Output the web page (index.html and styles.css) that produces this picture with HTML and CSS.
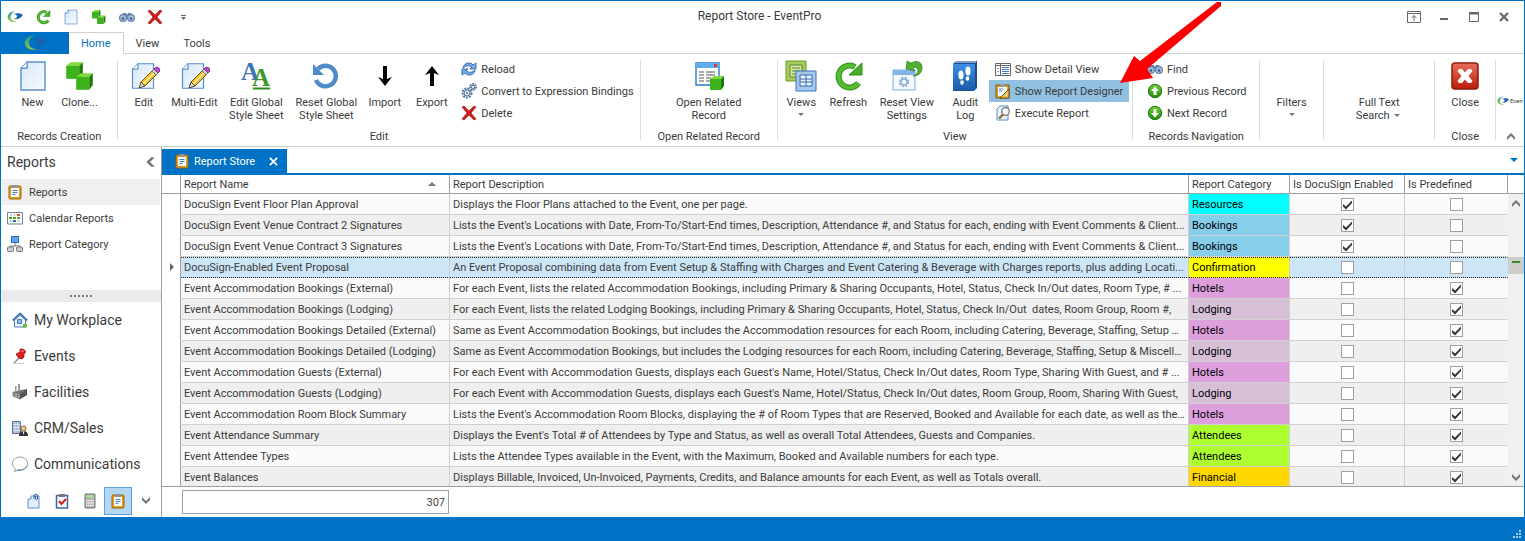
FILE: index.html
```
<!DOCTYPE html>
<html lang="en">
  <head>
    <meta charset="UTF-8" />
    <meta name="viewport" content="width=device-width, initial-scale=1.0" />
    <title>Report Store - EventPro</title>
    <link rel="stylesheet" href="styles.css">
  </head>
  <body>
    <!-- Icon sprite -->
    <svg class="sprite" aria-hidden="true">
      <defs>
        <linearGradient id="gGreen" x1="0" y1="0" x2="0" y2="1"><stop offset="0" stop-color="#6fd02a" /><stop offset="1" stop-color="#1d8a12" /></linearGradient>
        <linearGradient id="gPage" x1="0" y1="0" x2="1" y2="1"><stop offset="0" stop-color="#d6e8fa" /><stop offset="1" stop-color="#f6fbff" /></linearGradient>
        <linearGradient id="gRed" x1="0" y1="0" x2="0" y2="1"><stop offset="0" stop-color="#e8705c" /><stop offset="1" stop-color="#b81c08" /></linearGradient>
        <linearGradient id="gBlue" x1="0" y1="0" x2="0" y2="1"><stop offset="0" stop-color="#3f8ee0" /><stop offset="1" stop-color="#1b5cab" /></linearGradient>
        <linearGradient id="gLogo" x1="0" y1="0" x2="0" y2="1"><stop offset="0" stop-color="#1c9a8c" /><stop offset="1" stop-color="#8cc63c" /></linearGradient>
      </defs>
      <symbol id="logo" viewBox="0 0 22 18">
        <path d="M12 1C5 1 0 5 1 10c1 5 7 7 13 5-6 0-9-2-9-6s3-7 7-8z" fill="url(#gLogo)" />
        <path d="M9 5c5-2 10-1 13 1-3 5-8 7-13 6 3-1 5-2 5-4-1-2-3-3-5-3z" fill="#1b5fae" />
      </symbol>
      <symbol id="page" viewBox="0 0 32 32">
        <path d="M10 2h18v28H4V8h6z" fill="url(#gPage)" stroke="#5b8fcb" stroke-width="1.4" />
        <path d="M4 8l6-6v6z" fill="#fff" stroke="#5b8fcb" />
      </symbol>
      <symbol id="cube" viewBox="0 0 16 16">
        <path d="M1 4l4-3h10l-3 3z" fill="#7ddb3c" />
        <path d="M1 4h11v11H1z" fill="#3db21a" />
        <path d="M12 4l3-3v10l-3 4z" fill="#1c7a0c" />
      </symbol>
      <symbol id="cubes" viewBox="0 0 32 32">
        <use href="#cube" x="1" y="1" width="19" height="19" />
        <use href="#cube" x="11" y="12" width="19" height="19" />
      </symbol>
      <symbol id="refresh" viewBox="0 0 32 32">
        <path d="M26.500 23A11 11 0 1 1 23 7" fill="none" stroke="#2f8f1c" stroke-width="6" />
        <path d="M26.500 23A11 11 0 1 1 23 7" fill="none" stroke="#55bb30" stroke-width="4" />
        <path d="M30 3v12H17z" fill="#45ad28" stroke="#2f8f1c" />
      </symbol>
      <symbol id="binoc" viewBox="0 0 16 16">
        <path d="M2 8l2-4h3l1 2 1-2h3l2 4z" fill="#5f80ac" />
        <circle cx="4" cy="9" r="3.400" fill="#a9c2e0" stroke="#6884ab" stroke-width="1.200" />
        <circle cx="12" cy="9" r="3.400" fill="#a9c2e0" stroke="#6884ab" stroke-width="1.200" />
        <circle cx="4" cy="9.500" r="1.300" fill="#3b5d8d" /><circle cx="12" cy="9.500" r="1.300" fill="#3b5d8d" />
      </symbol>
      <symbol id="cross" viewBox="0 0 16 16">
        <path d="M1 2l2-1 5 5 5-5 2 1-5 6 5 6-2 1-5-5-5 5-2-1 5-6z" fill="#d31b1b" stroke="#a50f0f" stroke-width=".6" />
      </symbol>
      <symbol id="pencilpage" viewBox="0 0 32 32">
        <use href="#page" x="1" y="0" width="28" height="32" />
        <path d="M13 22L25 10l4 4-12 12z" fill="#f5c22e" stroke="#6d5314" />
        <path d="M15 24L27 12" stroke="#fff1a0" stroke-width="1.500" />
        <path d="M13 22l4 4-6 2z" fill="#efd9b0" stroke="#444" />
        <path d="M24 11l3-3 4 4-3 3z" fill="#ccc" stroke="#555" stroke-width=".6" />
        <path d="M26 9l2-2q4 0 4 4l-2 2z" fill="#b94bd0" stroke="#72247f" stroke-width=".8" />
      </symbol>
      <symbol id="undo" viewBox="0 0 32 32">
        <path d="M8 9a10.300 10.300 0 1 1-2 11" fill="none" stroke="#4e8ac6" stroke-width="4.400" />
        <path d="M3 4v11h11z" fill="#4e8ac6" />
      </symbol>
      <symbol id="down" viewBox="0 0 32 32"><path d="M14 6h4v13l5-2-7 9-7-9 5 2z" fill="#000" /></symbol>
      <symbol id="up" viewBox="0 0 32 32"><path d="M14 26h4V13l5 2-7-9-7 9 5-2z" fill="#000" /></symbol>
      <symbol id="reload" viewBox="0 0 16 16">
        <path d="M2 7q1-5 6-5 3 0 4 2l3-2v6H9l2-2q-5-3-9 1z" fill="#76a9e3" stroke="#2c66b0" stroke-width=".9" />
        <path d="M14 9q-1 5-6 5-3 0-4-2l-3 2V8h6l-2 2q5 3 9-1z" fill="#76a9e3" stroke="#2c66b0" stroke-width=".9" />
      </symbol>
      <symbol id="gears" viewBox="0 0 16 16">
        <circle cx="6" cy="10" r="4.500" fill="none" stroke="#56789b" stroke-width="2" stroke-dasharray="2 1" />
        <circle cx="6" cy="10" r="3" fill="#dce7f1" stroke="#56789b" /><circle cx="6" cy="10" r="1" fill="#56789b" />
        <circle cx="12" cy="4" r="3" fill="none" stroke="#56789b" stroke-width="2" stroke-dasharray="1.600 1" />
        <circle cx="12" cy="4" r="1.800" fill="#dce7f1" stroke="#56789b" />
      </symbol>
      <symbol id="related" viewBox="0 0 32 32">
        <path d="M3 3h23v22H3z" fill="#fff" stroke="#2a7ccc" stroke-width="1.400" />
        <path d="M3 3h23v5H3z" fill="#5cb0f2" /><path d="M21 4h3v3h-3z" fill="#e33b22" />
        <path d="M6 12h5m2 0h9M6 15h5m2 0h9M6 18h5m2 0h5M6 21h5m2 0h4" stroke="#555" />
        <use href="#cube" x="16" y="15" width="16" height="16" />
      </symbol>
      <symbol id="views" viewBox="0 0 32 32">
        <path d="M1 1h20v20H1z" fill="#a6cb5c" stroke="#719b2d" />
        <path d="M5 5h12v12H5z" fill="#d3e6a6" stroke="#5f8424" /><path d="M7 8h8M7 11h8M7 14h8" stroke="#5f8424" />
        <path d="M11 11h20v20H11z" fill="#a5c9ee" stroke="#3c74b5" />
        <path d="M15 15h12v11H15zM21 15v11M15 19h12M15 22h12" fill="#e8f3ff" stroke="#3769a8" />
      </symbol>
      <symbol id="resetview" viewBox="0 0 32 32">
        <path d="M2 10h22v20H2z" fill="#f3f9ff" stroke="#7fabdb" /><path d="M2 10h22v5H2z" fill="#82b4e8" />
        <circle cx="13" cy="22" r="4.300" fill="none" stroke="#8fb0d0" stroke-width="2" stroke-dasharray="2 1.400" />
        <circle cx="13" cy="22" r="3" fill="none" stroke="#8fb0d0" stroke-width="1.600" />
        <path d="M20 3c7-4 12 0 11 6-1 5-4 7-9 7 4-2 6-5 4-8-1-1-3-1-4 0l2 3-9-2 1-8z" fill="#53ae34" stroke="#2f8420" stroke-width=".7" />
      </symbol>
      <symbol id="audit" viewBox="0 0 32 32">
        <path d="M4 4l3-3h21v27l-3 3H4z" fill="#174f94" /><path d="M4 4h22v26H4z" fill="url(#gBlue)" /><path d="M6 2h21" stroke="#dfe9f5" />
        <ellipse cx="12" cy="15" rx="2.600" ry="4.500" fill="#fff" /><ellipse cx="13" cy="22.500" rx="1.800" ry="2.200" fill="#fff" />
        <ellipse cx="19" cy="11" rx="2.600" ry="4.500" fill="#fff" /><ellipse cx="18.500" cy="18.500" rx="1.800" ry="2.200" fill="#fff" />
      </symbol>
      <symbol id="detail" viewBox="0 0 16 16">
        <path d="M.5 2.500h15v12H.5zM5.500 2.500v12M.5 4.500h15" fill="#fff" stroke="#666" />
        <path d="M7 6.500h7M7 8.500h7M7 10.500h7M7 12.500h7" stroke="#3a7cc0" /><path d="M2 7.500h2M2 10.500h2" stroke="#999" />
      </symbol>
      <symbol id="designer" viewBox="0 0 16 16">
        <path d="M1 2h13v13H1z" fill="#e0a422" stroke="#7a5510" /><path d="M3 4h9v9H3z" fill="#f3f7fc" /><path d="M5 1h5v3H5z" fill="#999" />
        <path d="M14 6v9H5z" fill="#f2c246" stroke="#5e430f" stroke-width=".9" /><path d="M12 11v2h-2z" fill="#fff" /><path d="M4 6h4M4 8h3" stroke="#6a8cb5" />
      </symbol>
      <symbol id="execute" viewBox="0 0 16 16">
        <path d="M5 1h8v14H2V4z" fill="#e9f3fd" stroke="#5c8cc4" />
        <circle cx="10.500" cy="6.500" r="3.800" fill="#f7fbff" stroke="#777" stroke-width="1.300" /><path d="M8 9.500l-4 4" stroke="#9a6b35" stroke-width="2.400" />
      </symbol>
      <symbol id="recup" viewBox="0 0 16 16">
        <circle cx="8" cy="8" r="6.700" fill="url(#gGreen)" stroke="#1c7512" /><path d="M8 3.500L12 8h-2.500v4h-3V8H4z" fill="#fff" />
      </symbol>
      <symbol id="recdown" viewBox="0 0 16 16">
        <circle cx="8" cy="8" r="6.700" fill="url(#gGreen)" stroke="#1c7512" /><path d="M8 12.500L4 8h2.500V4h3v4H12z" fill="#fff" />
      </symbol>
      <symbol id="closebig" viewBox="0 0 32 32">
        <rect x="3" y="3" width="26" height="26" rx="3" fill="url(#gRed)" stroke="#941808" stroke-width="1.500" />
        <path d="M10 9h3l3 3.500L19 9h3l1.500 2-4 5 4 5-1.500 2h-3l-3-3.500-3 3.500h-3l-1.500-2 4-5-4-5z" fill="#fff" />
      </symbol>
      <symbol id="clip" viewBox="0 0 16 16">
        <rect x="2" y="2" width="12" height="13" rx="1" fill="#e2a01c" stroke="#94620c" /><path d="M4 4h8v9H4z" fill="#f5f9ff" />
        <path d="M5.500 1h5v3h-5z" fill="#8d949c" /><path d="M5.500 6.500h5M5.500 8.500h5M5.500 10.500h3" stroke="#4c7fbd" />
      </symbol>
      <symbol id="calendar" viewBox="0 0 16 16">
        <path d="M.5 2.500h15v11.500H.5z" fill="#fff" stroke="#6886a6" /><path d="M3 4h2v2H3zM3 10h2v2H3z" fill="#c5cbd2" />
        <path d="M6.500 4h2v2h-2z" fill="#c5cbd2" /><path d="M10 4h3v2h-3z" fill="#e0522a" /><path d="M2 7h3v2H2zM6 7h3v2H6z" fill="#51a627" />
        <path d="M6 10h3v2H6z" fill="#2a6fb5" /><path d="M10 7h3v2h-3z" fill="#51a627" /><path d="M10.500 10h2v2h-2z" fill="#c5cbd2" />
      </symbol>
      <symbol id="tree" viewBox="0 0 16 16">
        <path d="M8 7v3M3 12v-2h10v2" fill="none" stroke="#777" /><rect x="4.500" y=".5" width="7" height="6" fill="#5aa6ee" stroke="#2f71b8" />
        <rect x=".5" y="11" width="6" height="4.500" rx="1" fill="#ccc" stroke="#777" /><rect x="9.500" y="11" width="6" height="4.500" rx="1" fill="#ccc" stroke="#777" />
      </symbol>
      <symbol id="home" viewBox="0 0 16 16">
        <path d="M2.500 8v7h11V8L8 3z" fill="#eaf2fb" stroke="#5b84b5" /><path d="M.7 8.500L8 1.500l7.300 7" fill="none" stroke="#4679b8" stroke-width="1.800" />
        <path d="M5.500 7.500h4v4h-4z" fill="#8fbbe8" stroke="#4679b8" /><path d="M11 12h4v3.500h-4z" fill="#6eb83a" />
      </symbol>
      <symbol id="pin" viewBox="0 0 16 16">
        <path d="M2 15l6-6" stroke="#888" stroke-width="1.300" /><path d="M1 15.500h11" stroke="#ccc" />
        <path d="M8 1q4-1 6 3l-2 2v3l-2 2q-4 0-6-5l2-1 2-1z" fill="#d92323" stroke="#971010" stroke-width=".7" /><path d="M9 3q2-1 3 1" stroke="#f79a9a" fill="none" />
      </symbol>
      <symbol id="factory" viewBox="0 0 16 16">
        <path d="M1 8l8-2 6-1v6l-7 4-7-3z" fill="#777" /><path d="M1 8l7 2v5l-7-3z" fill="#aaa" stroke="#555" stroke-width=".6" /><path d="M8 10l7-5v6l-7 4z" fill="#555" />
        <path d="M3 2h1.500v6H3zM6 0h2v7H6z" fill="#999" /><path d="M2 10h1v1H2zM5 11h1v1H5z" fill="#333" />
      </symbol>
      <symbol id="crm" viewBox="0 0 16 16">
        <path d="M.5 1.500h8v12h-8z" fill="#9eb2d2" stroke="#5e7396" /><path d="M3 2v11M6 2v11M1 4.500h7M1 7.500h7M1 10.500h7" stroke="#e3ebf6" stroke-width=".8" />
        <path d="M7 16q0-5 4.500-5t4.500 5z" fill="#333" /><path d="M10.500 11l1 4 1-4z" fill="#fff" /><circle cx="11.500" cy="8.500" r="2.500" fill="#f2c891" stroke="#8a5b23" />
      </symbol>
      <symbol id="bubble" viewBox="0 0 16 16">
        <path d="M8 1c4 0 7.500 2.800 7.500 6.500S12 14 8 14H6l-3.500 1.700 1-3C2 11.700.5 10 .5 7.500.5 3.800 4 1 8 1z" fill="#fff" stroke="#999" />
        <path d="M5 14q8 1 10-4" stroke="#4a86bd" fill="none" />
      </symbol>
      <symbol id="note" viewBox="0 0 16 16">
        <path d="M5 3h8v12H2V6h3z" fill="#e4f0fd" stroke="#5b8fcb" /><path d="M8 6V2q2-2 3.500 0v4q-1 1.500-2 0V3" fill="none" stroke="#2c5a8c" />
      </symbol>
      <symbol id="task" viewBox="0 0 16 16">
        <path d="M2.500 2.500h11v12.500h-11z" fill="#f3f8fe" stroke="#3c68a4" stroke-width="1.500" /><path d="M5 1h6v3H5z" fill="#777" /><path d="M5 8l2.500 3L12 6" fill="none" stroke="#d42020" stroke-width="2" />
      </symbol>
      <symbol id="calc" viewBox="0 0 16 16">
        <path d="M3 1h10v14H3z" fill="#aaa" stroke="#777" /><path d="M4 2h8v3H4z" fill="#a9d89e" />
        <path d="M4 7.500h8M4 10h8M4 12.500h8" stroke="#f4f4f4" stroke-width="1.500" stroke-dasharray="1.600 .5" />
      </symbol>
      <symbol id="chev" viewBox="0 0 10 8"><path d="M1 0v3l4 4 4-4V0L5 4z" fill="#777" /></symbol>
    </svg>

    <div class="window">
      <header class="titlebar">
        <div class="quick-access">
          <svg class="icon"><use href="#logo" /></svg>
          <button class="qa" aria-label="Refresh"><svg class="icon"><use href="#refresh" /></svg></button>
          <button class="qa" aria-label="New"><svg class="icon"><use href="#page" /></svg></button>
          <button class="qa" aria-label="Clone"><svg class="icon"><use href="#cubes" /></svg></button>
          <button class="qa" aria-label="Find"><svg class="icon"><use href="#binoc" /></svg></button>
          <button class="qa" aria-label="Delete"><svg class="icon"><use href="#cross" /></svg></button>
          <button class="qa" aria-label="Customize toolbar"><svg class="icon" viewBox="0 0 16 16"><path d="M6 6.500h5" stroke="#666" /><path d="M6 8h5l-2.500 3z" fill="#666" /></svg></button>
        </div>
        <div class="window-title">Report Store - EventPro</div>
        <div class="window-buttons">
          <button aria-label="Ribbon display options"><svg class="icon" viewBox="0 0 16 16"><path d="M1.500 2.500h13v11h-13zM1.500 4.500h13M8 12V6.500M5.500 9L8 6.500 10.500 9" fill="none" stroke="#666" /></svg></button>
          <button aria-label="Minimize"><svg class="icon" viewBox="0 0 16 16"><path d="M4 10h8" stroke="#666" stroke-width="2" /></svg></button>
          <button aria-label="Maximize"><svg class="icon" viewBox="0 0 16 16"><path d="M3.500 3.500h9v9h-9z" fill="none" stroke="#666" /><path d="M3 4.500h10" stroke="#666" stroke-width="2" /></svg></button>
          <button aria-label="Close window"><svg class="icon" viewBox="0 0 16 16"><path d="M4 4l8 8M12 4l-8 8" stroke="#666" stroke-width="2.200" /></svg></button>
        </div>
      </header>

      <nav class="ribbon-tabs">
        <button class="app-button" aria-label="Application menu"><svg><use href="#logo" /></svg></button>
        <button class="ribbon-tab active">Home</button>
        <button class="ribbon-tab">View</button>
        <button class="ribbon-tab">Tools</button>
      </nav>

      <div class="ribbon">
        <section class="group creation">
          <div class="group-items">
            <button class="big"><svg><use href="#page" /></svg>New</button>
            <button class="big"><svg><use href="#cubes" /></svg>Clone...</button>
          </div>
          <div class="caption">Records Creation</div>
        </section>
        <section class="group edit">
          <div class="group-items">
            <button class="big"><svg><use href="#pencilpage" /></svg>Edit</button>
            <button class="big medium"><svg><use href="#pencilpage" /></svg>Multi-Edit</button>
            <button class="big wide">
              <svg viewBox="0 0 32 32">
                <text x="1" y="20" class="glyph-a" fill="#3d74b8">A</text>
                <text x="12" y="26" class="glyph-a" fill="#3c9a2a">A</text>
                <path d="M13 28.500h17" stroke="#2e8a1e" stroke-width="2" />
              </svg>Edit Global<br>Style Sheet
            </button>
            <button class="big wide"><svg><use href="#undo" /></svg>Reset Global<br>Style Sheet</button>
            <button class="big"><svg><use href="#down" /></svg>Import</button>
            <button class="big"><svg><use href="#up" /></svg>Export</button>
            <div class="small-list">
              <button class="small"><svg class="icon"><use href="#reload" /></svg>Reload</button>
              <button class="small"><svg class="icon"><use href="#gears" /></svg>Convert to Expression Bindings</button>
              <button class="small"><svg class="icon"><use href="#cross" /></svg>Delete</button>
            </div>
          </div>
          <div class="caption">Edit</div>
        </section>
        <section class="group related">
          <div class="group-items centered">
            <button class="big wide"><svg><use href="#related" /></svg>Open Related<br>Record</button>
          </div>
          <div class="caption">Open Related Record</div>
        </section>
        <section class="group view">
          <div class="group-items">
            <button class="big"><svg><use href="#views" /></svg>Views<span class="arrow"></span></button>
            <button class="big"><svg><use href="#refresh" /></svg>Refresh</button>
            <button class="big wide"><svg><use href="#resetview" /></svg>Reset View<br>Settings</button>
            <button class="big"><svg><use href="#audit" /></svg>Audit<br>Log</button>
            <div class="small-list">
              <button class="small"><svg class="icon"><use href="#detail" /></svg>Show Detail View</button>
              <button class="small selected">
                <svg class="icon"><use href="#designer" /></svg>Show Report Designer
                <svg class="pointer" viewBox="0 0 102 82" aria-hidden="true"><path d="M0 81L14 54l6 5L97 0h4v4L27 67l6 9z" fill="#f00" /></svg>
              </button>
              <button class="small"><svg class="icon"><use href="#execute" /></svg>Execute Report</button>
            </div>
          </div>
          <div class="caption">View</div>
        </section>
        <section class="group records">
          <div class="group-items">
            <div class="small-list">
              <button class="small"><svg class="icon"><use href="#binoc" /></svg>Find</button>
              <button class="small"><svg class="icon"><use href="#recup" /></svg>Previous Record</button>
              <button class="small"><svg class="icon"><use href="#recdown" /></svg>Next Record</button>
            </div>
          </div>
          <div class="caption">Records Navigation</div>
        </section>
        <section class="group filters">
          <div class="group-items centered">
            <button class="big"><span class="blank"></span>Filters<span class="arrow"></span></button>
          </div>
        </section>
        <section class="group search">
          <div class="group-items centered">
            <button class="big wide"><span class="blank"></span>Full Text<br>Search <span class="arrow inline"></span></button>
          </div>
        </section>
        <section class="group closing">
          <div class="group-items centered">
            <button class="big"><svg><use href="#closebig" /></svg>Close</button>
          </div>
          <div class="caption">Close</div>
        </section>
        <div class="brand">
          <div class="brand-mark"><svg><use href="#logo" /></svg><span>Even</span></div>
          <button class="collapse" aria-label="Collapse ribbon"><svg class="flip"><use href="#chev" /></svg></button>
        </div>
      </div>

      <div class="workspace">
        <aside class="sidebar">
          <div class="sidebar-head">
            <h2>Reports</h2>
            <button aria-label="Collapse navigation"><svg class="turn"><use href="#chev" /></svg></button>
          </div>
          <nav class="links">
            <a href="#" class="current"><svg class="icon"><use href="#clip" /></svg>Reports</a>
            <a href="#"><svg class="icon"><use href="#calendar" /></svg>Calendar Reports</a>
            <a href="#"><svg class="icon"><use href="#tree" /></svg>Report Category</a>
          </nav>
          <div class="splitter"><i></i><i></i><i></i><i></i><i></i><i></i></div>
          <nav class="modules">
            <a href="#"><svg class="icon"><use href="#home" /></svg>My Workplace</a>
            <a href="#"><svg class="icon"><use href="#pin" /></svg>Events</a>
            <a href="#"><svg class="icon"><use href="#factory" /></svg>Facilities</a>
            <a href="#"><svg class="icon"><use href="#crm" /></svg>CRM/Sales</a>
            <a href="#"><svg class="icon"><use href="#bubble" /></svg>Communications</a>
          </nav>
          <div class="module-bar">
            <button aria-label="Notes"><svg class="icon"><use href="#note" /></svg></button>
            <button aria-label="Tasks"><svg class="icon"><use href="#task" /></svg></button>
            <button aria-label="Accounting"><svg class="icon"><use href="#calc" /></svg></button>
            <button aria-label="Reports" class="current"><svg class="icon"><use href="#clip" /></svg></button>
            <button aria-label="More modules"><svg class="chevron"><use href="#chev" /></svg></button>
          </div>
        </aside>

        <main class="content">
          <div class="doc-tabs">
            <div class="doc-tab">
              <svg class="icon"><use href="#clip" /></svg>
              <span>Report Store</span>
              <button aria-label="Close tab"><svg viewBox="0 0 10 10"><path d="M1 1l8 8M9 1L1 9" stroke="#fff" stroke-width="2" /></svg></button>
            </div>
            <button class="tab-menu" aria-label="Open tabs"><span></span></button>
          </div>

          <div class="grid">
            <div class="grid-table">
              <table>
                <colgroup>
                  <col class="col-mark"><col class="col-name"><col><col class="col-category"><col class="col-docusign"><col class="col-predefined">
                </colgroup>
                <thead>
                  <tr>
                    <th class="mark"></th>
                    <th><span class="sorted">Report Name</span></th>
                    <th>Report Description</th>
                    <th>Report Category</th>
                    <th>Is DocuSign Enabled</th>
                    <th>Is Predefined</th>
                  </tr>
                </thead>
                <tbody>
                  <tr>
                    <td class="mark"></td><td>DocuSign Event Floor Plan Approval</td>
                    <td>Displays the Floor Plans attached to the Event, one per page.</td>
                    <td class="resources">Resources</td>
                    <td><input type="checkbox" aria-label="Is DocuSign Enabled" checked></td><td><input type="checkbox" aria-label="Is Predefined"></td>
                  </tr>
                  <tr>
                    <td class="mark"></td><td>DocuSign Event Venue Contract 2 Signatures</td>
                    <td>Lists the Event's Locations with Date, From-To/Start-End times, Description, Attendance #, and Status for each, ending with Event Comments &amp; Client...</td>
                    <td class="bookings">Bookings</td>
                    <td><input type="checkbox" aria-label="Is DocuSign Enabled" checked></td><td><input type="checkbox" aria-label="Is Predefined"></td>
                  </tr>
                  <tr>
                    <td class="mark"></td><td>DocuSign Event Venue Contract 3 Signatures</td>
                    <td>Lists the Event's Locations with Date, From-To/Start-End times, Description, Attendance #, and Status for each, ending with Event Comments &amp; Client...</td>
                    <td class="bookings">Bookings</td>
                    <td><input type="checkbox" aria-label="Is DocuSign Enabled" checked></td><td><input type="checkbox" aria-label="Is Predefined"></td>
                  </tr>
                  <tr class="focused">
                    <td class="mark"><span class="row-mark"></span></td><td>DocuSign-Enabled Event Proposal</td>
                    <td>An Event Proposal combining data from Event Setup &amp; Staffing with Charges and Event Catering &amp; Beverage with Charges reports, plus adding Locati...</td>
                    <td class="confirmation">Confirmation</td>
                    <td><input type="checkbox" aria-label="Is DocuSign Enabled"></td><td><input type="checkbox" aria-label="Is Predefined"></td>
                  </tr>
                  <tr>
                    <td class="mark"></td><td>Event Accommodation Bookings (External)</td>
                    <td>For each Event, lists the related Accommodation Bookings, including Primary &amp; Sharing Occupants, Hotel, Status, Check In/Out dates, Room Type, # ...</td>
                    <td class="hotels">Hotels</td>
                    <td><input type="checkbox" aria-label="Is DocuSign Enabled"></td><td><input type="checkbox" aria-label="Is Predefined" checked></td>
                  </tr>
                  <tr>
                    <td class="mark"></td><td>Event Accommodation Bookings (Lodging)</td>
                    <td>For each Event, lists the related Lodging Bookings, including Primary &amp; Sharing Occupants, Hotel, Status, Check In/Out&nbsp; dates, Room Group, Room #,</td>
                    <td class="lodging">Lodging</td>
                    <td><input type="checkbox" aria-label="Is DocuSign Enabled"></td><td><input type="checkbox" aria-label="Is Predefined" checked></td>
                  </tr>
                  <tr>
                    <td class="mark"></td><td>Event Accommodation Bookings Detailed (External)</td>
                    <td>Same as Event Accommodation Bookings, but includes the Accommodation resources for each Room, including Catering, Beverage, Staffing, Setup &amp; ...</td>
                    <td class="hotels">Hotels</td>
                    <td><input type="checkbox" aria-label="Is DocuSign Enabled"></td><td><input type="checkbox" aria-label="Is Predefined" checked></td>
                  </tr>
                  <tr>
                    <td class="mark"></td><td>Event Accommodation Bookings Detailed (Lodging)</td>
                    <td>Same as Event Accommodation Bookings, but includes the Lodging resources for each Room, including Catering, Beverage, Staffing, Setup &amp; Miscellan...</td>
                    <td class="lodging">Lodging</td>
                    <td><input type="checkbox" aria-label="Is DocuSign Enabled"></td><td><input type="checkbox" aria-label="Is Predefined" checked></td>
                  </tr>
                  <tr>
                    <td class="mark"></td><td>Event Accommodation Guests (External)</td>
                    <td>For each Event with Accommodation Guests, displays each Guest's Name, Hotel/Status, Check In/Out dates, Room Type, Sharing With Guest, and # ...</td>
                    <td class="hotels">Hotels</td>
                    <td><input type="checkbox" aria-label="Is DocuSign Enabled"></td><td><input type="checkbox" aria-label="Is Predefined" checked></td>
                  </tr>
                  <tr>
                    <td class="mark"></td><td>Event Accommodation Guests (Lodging)</td>
                    <td>For each Event with Accommodation Guests, displays each Guest's Name, Hotel/Status, Check In/Out dates, Room Group, Room, Sharing With Guest,</td>
                    <td class="lodging">Lodging</td>
                    <td><input type="checkbox" aria-label="Is DocuSign Enabled"></td><td><input type="checkbox" aria-label="Is Predefined" checked></td>
                  </tr>
                  <tr>
                    <td class="mark"></td><td>Event Accommodation Room Block Summary</td>
                    <td>Lists the Event's Accommodation Room Blocks, displaying the # of Room Types that are Reserved, Booked and Available for each date, as well as the ...</td>
                    <td class="hotels">Hotels</td>
                    <td><input type="checkbox" aria-label="Is DocuSign Enabled"></td><td><input type="checkbox" aria-label="Is Predefined" checked></td>
                  </tr>
                  <tr>
                    <td class="mark"></td><td>Event Attendance Summary</td>
                    <td>Displays the Event's Total # of Attendees by Type and Status, as well as overall Total Attendees, Guests and Companies.</td>
                    <td class="attendees">Attendees</td>
                    <td><input type="checkbox" aria-label="Is DocuSign Enabled"></td><td><input type="checkbox" aria-label="Is Predefined" checked></td>
                  </tr>
                  <tr>
                    <td class="mark"></td><td>Event Attendee Types</td>
                    <td>Lists the Attendee Types available in the Event, with the Maximum, Booked and Available numbers for each type.</td>
                    <td class="attendees">Attendees</td>
                    <td><input type="checkbox" aria-label="Is DocuSign Enabled"></td><td><input type="checkbox" aria-label="Is Predefined" checked></td>
                  </tr>
                  <tr>
                    <td class="mark"></td><td>Event Balances</td>
                    <td>Displays Billable, Invoiced, Un-Invoiced, Payments, Credits, and Balance amounts for each Event, as well as Totals overall.</td>
                    <td class="financial">Financial</td>
                    <td><input type="checkbox" aria-label="Is DocuSign Enabled"></td><td><input type="checkbox" aria-label="Is Predefined" checked></td>
                  </tr>
                </tbody>
              </table>
            </div>
            <div class="scrollbar">
              <div class="scroll-head"></div>
              <button aria-label="Scroll up"><svg class="flip"><use href="#chev" /></svg></button>
              <div class="track"><div class="thumb"></div></div>
              <button aria-label="Scroll down"><svg><use href="#chev" /></svg></button>
            </div>
          </div>

          <div class="summary">
            <div class="total">307</div>
          </div>
        </main>
      </div>

      <footer class="statusbar">
        <svg viewBox="0 0 8 8"><path d="M6 0h2v2H6zM3 3h2v2H3zM6 3h2v2H6zM0 6h2v2H0zM3 6h2v2H3zM6 6h2v2H6z" fill="#a8cdec" /></svg>
      </footer>
    </div>
  </body>
</html>
```
FILE: styles.css
```
* {
  box-sizing: border-box;
}

body {
  margin: 0;
  font-family: Roboto, "Open Sans", sans-serif;
  font-size: 11px;
  line-height: 13px;
  color: #3b3b3b;
  background-color: white;
}

button {
  background: none;
  border: none;
  padding: 0;
  font: inherit;
  color: inherit;
  cursor: pointer;
}

a {
  color: inherit;
  text-decoration: none;
}

svg {
  display: block;
  flex: none;
}

.sprite {
  position: absolute;
  width: 0;
  height: 0;
}

.icon {
  width: 16px;
  height: 16px;
}

.glyph-a {
  font-family: "Liberation Serif", serif;
  font-size: 25px;
  font-weight: bold;
}

.window {
  display: flex;
  flex-direction: column;
  height: 100vh;
  border: 1px solid #0072c6;
  border-bottom: none;
  overflow: hidden;
}

/* Title bar */
.titlebar {
  display: grid;
  grid-template-columns: 1fr auto 1fr;
  align-items: center;
  flex: none;
  height: 31px;
  padding: 0 12px 0 6px;
}

.quick-access {
  display: flex;
  gap: 12px;
}

.window-title {
  font-size: 12px;
}

.window-buttons {
  display: flex;
  justify-content: flex-end;
  gap: 14px;
}

/* Ribbon tabs */
.ribbon-tabs {
  display: flex;
  flex: none;
  height: 22px;
  border-bottom: 1px solid #d0d0d0;
}

.app-button {
  display: flex;
  align-items: center;
  justify-content: center;
  width: 68px;
  height: 22px;
  background-color: #0072c6;
}

.app-button svg {
  width: 22px;
  height: 18px;
}

.ribbon-tab {
  height: 22px;
  padding: 0 12px;
}

.ribbon-tab.active {
  color: #0072c6;
  background-color: white;
  border: 1px solid #d0d0d0;
  border-bottom: none;
  border-left: none;
}

/* Ribbon */
.ribbon {
  display: flex;
  flex: none;
  height: 93px;
  padding: 6px 0;
  border-bottom: 1px solid #d0d0d0;
}

.group {
  display: flex;
  flex-direction: column;
  justify-content: space-between;
  min-width: 0;
  border-right: 1px solid #dcdcdc;
}

.creation { flex: 117 1 0; }
.edit { flex: 524 1 0; }
.related { flex: 137 1 0; }
.view { flex: 356 1 0; }
.records { flex: 127 1 0; }
.filters { flex: 63 1 0; }
.search { flex: 111 1 0; }
.closing { flex: 60 1 0; }

.group-items {
  display: flex;
  align-items: flex-start;
}

.group-items.centered {
  justify-content: center;
}

.creation .group-items {
  padding-left: 8px;
}

.edit .group-items {
  padding-left: 2px;
}

.records .group-items {
  padding-left: 8px;
}

.caption {
  text-align: center;
  height: 10px;
  white-space: nowrap;
}

.big {
  display: block;
  width: 47px;
  text-align: center;
  white-space: nowrap;
}

.big.medium {
  width: 54px;
}

.big.wide {
  width: 70px;
}

.big > svg,
.blank {
  display: block;
  width: 32px;
  height: 32px;
  margin: 0 auto 4px;
}

.arrow {
  display: block;
  width: 5px;
  margin: 4px auto;
  border: 3px solid transparent;
  border-top-color: #777;
  border-bottom: none;
}

.arrow.inline {
  display: inline-block;
  margin: 2px;
}

.small-list {
  display: flex;
  flex-direction: column;
  align-items: flex-start;
  margin-top: -2px;
}

.small {
  display: flex;
  align-items: center;
  gap: 4px;
  height: 22px;
  padding: 0 6px;
  white-space: nowrap;
}

.small.selected {
  position: relative;
  background-color: #92c0e0;
}

/* Red callout arrow, drawn over the ribbon */
.pointer {
  position: absolute;
  left: calc(100% - 9px);
  bottom: 18px;
  width: 102px;
  height: 82px;
  z-index: 2;
  pointer-events: none;
}

.brand {
  display: flex;
  flex-direction: column;
  justify-content: space-between;
  align-items: center;
  width: 28px;
  padding: 34px 0 0 1px;
}

.brand-mark {
  display: flex;
  align-items: center;
  width: 100%;
  gap: 1px;
  font-size: 6px;
}

.brand-mark svg {
  width: 12px;
  height: 10px;
}

.collapse svg {
  width: 10px;
  height: 8px;
}

.flip {
  transform: rotate(180deg);
}

.turn {
  transform: rotate(90deg);
}

/* Workspace */
.workspace {
  display: flex;
  flex: 1;
  min-height: 0;
}

.sidebar {
  display: flex;
  flex-direction: column;
  width: 161px;
  border-right: 1px solid #a0a0a0;
}

.sidebar-head {
  display: flex;
  align-items: center;
  justify-content: space-between;
  height: 32px;
  padding: 0 5px 2px 6px;
}

.sidebar-head h2 {
  margin: 0;
  font-size: 14px;
  font-weight: normal;
}

.sidebar-head svg {
  width: 12px;
  height: 10px;
}

.module-bar .chevron {
  width: 10px;
  height: 8px;
}

.links {
  flex: 1;
  padding: 0 1px;
}

.links a {
  display: flex;
  align-items: center;
  gap: 6px;
  height: 26px;
  padding-left: 5px;
}

.links a.current {
  background-color: #f0f0f0;
}

.splitter {
  display: flex;
  align-items: center;
  justify-content: center;
  gap: 2px;
  height: 12px;
  background-color: #ebebeb;
}

.splitter i {
  width: 2px;
  height: 2px;
  background-color: #777;
}

.modules a {
  display: flex;
  align-items: center;
  gap: 6px;
  height: 36px;
  padding-left: 11px;
  font-size: 14px;
}

.module-bar {
  display: flex;
  justify-content: flex-end;
  height: 35px;
  padding: 5px 1px 2px;
}

.module-bar button {
  display: flex;
  align-items: center;
  justify-content: center;
  width: 28px;
  height: 28px;
}

.module-bar button.current {
  background-color: #b3d7f2;
  border: 1px solid #5ba3e0;
}

.content {
  display: flex;
  flex-direction: column;
  flex: 1;
  min-width: 0;
}

.doc-tabs {
  display: flex;
  align-items: flex-end;
  justify-content: space-between;
  flex: none;
  height: 28px;
  border-bottom: 2px solid #0072c6;
}

.doc-tab {
  display: flex;
  align-items: center;
  gap: 4px;
  height: 24px;
  padding: 0 7px 0 12px;
  color: white;
  background-color: #0072c6;
}

.doc-tab button {
  padding: 2px;
  margin-left: 8px;
}

.doc-tab button svg {
  width: 9px;
  height: 9px;
}

.tab-menu {
  align-self: center;
  padding: 4px 6px;
}

.tab-menu span {
  display: block;
  border: 4px solid transparent;
  border-top-color: #0072c6;
  border-bottom: none;
}

/* Report grid */
.grid {
  display: flex;
  flex: 1;
  min-height: 0;
}

.grid-table {
  flex: 1;
  min-width: 0;
  overflow: hidden;
}

table {
  width: 100%;
  table-layout: fixed;
  border-collapse: separate;
  border-spacing: 0;
}

.col-mark { width: 19px; }
.col-name { width: 269px; }
.col-category { width: 101px; }
.col-docusign { width: 115px; }
.col-predefined { width: 103px; }

th,
td {
  padding: 0 3px;
  text-align: left;
  font-weight: normal;
  white-space: nowrap;
  overflow: hidden;
  text-overflow: ellipsis;
}

th {
  height: 19px;
  border-right: 1px solid #a0a0a0;
  border-bottom: 1px solid #a0a0a0;
}

td {
  height: 21px;
  background-color: #fafafa;
  border-right: 1px solid #d0d0d0;
  border-bottom: 1px solid #d0d0d0;
}

tbody tr:nth-child(even) td {
  background-color: #efefef;
}

td.mark,
tbody tr:nth-child(even) td.mark {
  padding: 0;
  background-color: white;
  border-right-color: #a0a0a0;
  border-bottom-color: white;
}

td:last-child {
  border-right-color: transparent;
}

.sorted {
  display: flex;
  align-items: center;
  justify-content: space-between;
}

.sorted::after {
  content: "";
  margin-right: 10px;
  border: 4px solid transparent;
  border-bottom-color: #777;
  border-top: none;
}

.row-mark {
  display: block;
  margin-left: 8px;
  width: 4px;
  border: 4px solid transparent;
  border-left-color: #666;
  border-right: none;
}

tbody tr.focused td:not(.mark) {
  background-color: #cde6f7;
  border-top: 1px dotted #222;
  border-bottom: 1px dotted #222;
}

tbody td.resources { background-color: #00ffff; }
tbody tr:nth-child(n) td.bookings { background-color: #87ceeb; }
tbody tr.focused td.confirmation:not(.mark) { background-color: #ffff00; }
tbody tr:nth-child(n) td.hotels { background-color: #dda0dd; }
tbody tr:nth-child(n) td.lodging { background-color: #d8bfd8; }
tbody tr:nth-child(n) td.attendees { background-color: #adff2f; }
tbody tr:nth-child(n) td.financial { background-color: #ffd700; }

.resources,
.bookings,
.confirmation,
.hotels,
.lodging,
.attendees,
.financial {
  color: #000;
}

input[type="checkbox"] {
  appearance: none;
  display: block;
  width: 13px;
  height: 13px;
  margin: 0 auto;
  border: 1px solid #a0a0a0;
  background: white center no-repeat;
}

input[type="checkbox"]:checked {
  background-image: url("data:image/svg+xml,%3Csvg xmlns='http://www.w3.org/2000/svg' width='11' height='11'%3E%3Cpath d='M1 5v2.500l3 3L10 4V1.500L4 7.500z' fill='%23333'/%3E%3C/svg%3E");
}

.scrollbar {
  display: flex;
  flex-direction: column;
  width: 16px;
  background-color: #f0f0f0;
}

.scroll-head {
  height: 19px;
  background-color: white;
  border-bottom: 1px solid #a0a0a0;
}

.scrollbar button {
  display: flex;
  align-items: center;
  justify-content: center;
  height: 17px;
}

.scrollbar svg {
  width: 10px;
  height: 8px;
}

.track {
  flex: 1;
  padding-top: 46px;
}

.thumb {
  height: 17px;
  padding: 4px;
  background-color: #cdcdcd;
}

.thumb::before {
  content: "";
  display: block;
  height: 2px;
  background-color: #3c8c2c;
}

.summary {
  flex: none;
  height: 31px;
  padding: 3px 0 3px 20px;
  border-top: 1px solid #a0a0a0;
}

.total {
  display: flex;
  align-items: center;
  justify-content: flex-end;
  width: 267px;
  height: 24px;
  padding: 0 3px;
  border: 1px solid #a0a0a0;
}

.statusbar {
  display: flex;
  align-items: flex-end;
  justify-content: flex-end;
  flex: none;
  height: 24px;
  padding: 3px;
  background-color: #0072c6;
}

.statusbar svg {
  width: 8px;
  height: 8px;
}
```
